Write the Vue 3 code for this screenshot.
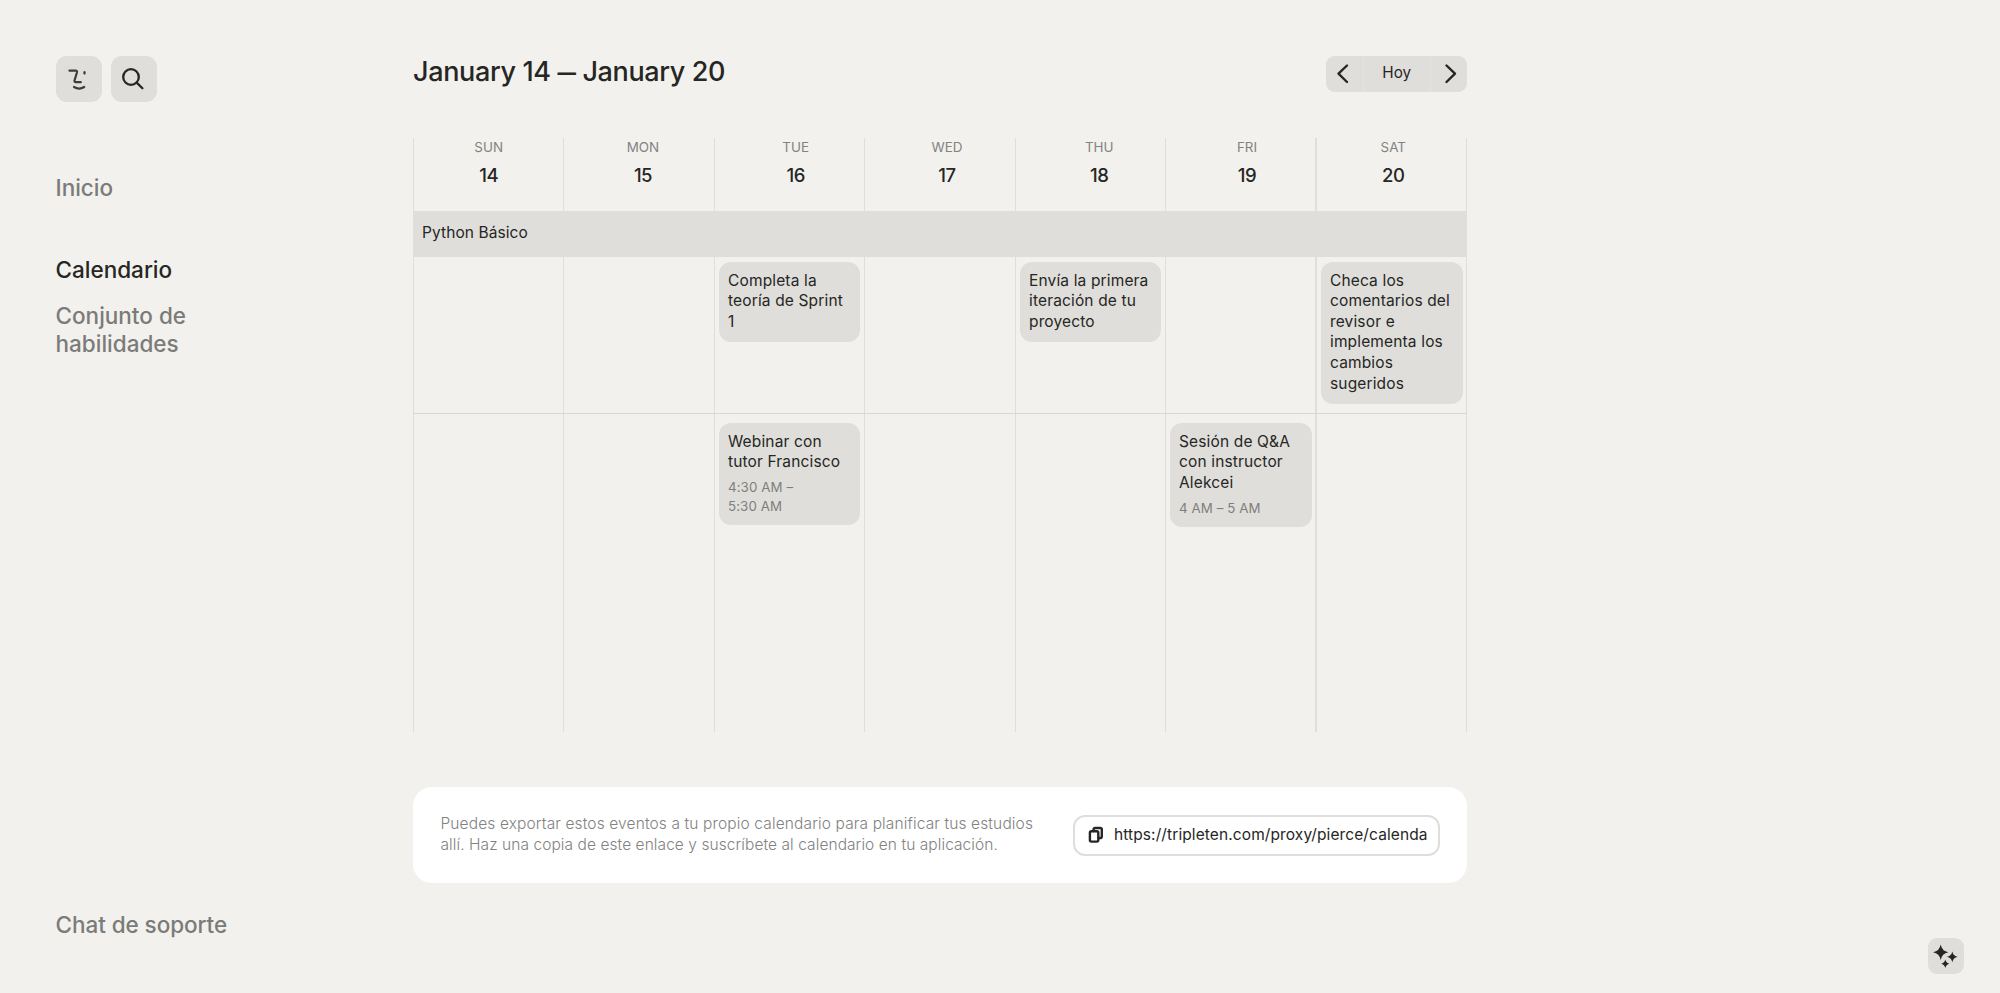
<script setup>
const days = [
  { name: 'SUN', num: 14 },
  { name: 'MON', num: 15 },
  { name: 'TUE', num: 16 },
  { name: 'WED', num: 17 },
  { name: 'THU', num: 18 },
  { name: 'FRI', num: 19 },
  { name: 'SAT', num: 20 },
]
const allDay = [
  null,
  null,
  { lines: ['Completa la', 'teoría de Sprint', '1'] },
  null,
  { lines: ['Envía la primera', 'iteración de tu', 'proyecto'] },
  null,
  { lines: ['Checa los', 'comentarios del', 'revisor e', 'implementa los', 'cambios', 'sugeridos'] },
]
const timed = [
  null,
  null,
  { lines: ['Webinar con', 'tutor Francisco'], time: ['4:30 AM –', '5:30 AM'] },
  null,
  null,
  { lines: ['Sesión de Q&A', 'con instructor', 'Alekcei'], time: ['4 AM – 5 AM'] },
  null,
]
</script>

<template>
  <div class="page">
    <aside class="sidebar">
      <div class="tools">
        <button class="tool">
          <svg width="46" height="46" viewBox="0 0 46 46"><path d="M13.4 14.6H19.6Q21.4 14.6 20.9 16.5L18.6 24.2Q18 26.2 20 26.2H24.8M18 31Q23.2 34.2 28.2 31" /><path d="M28.5 16.2V17.6" /></svg>
        </button>
        <button class="tool">
          <svg class="dark" width="46" height="46" viewBox="0 0 46 46"><circle cx="20" cy="21" r="7.8" /><path d="M25.7 26.6L31.4 32.2" /></svg>
        </button>
      </div>
      <nav>
        <a class="first">Inicio</a>
        <a class="active">Calendario</a>
        <a>Conjunto de<br />habilidades</a>
      </nav>
      <a class="support">Chat de soporte</a>
    </aside>

    <main>
      <header>
        <h1>January 14 <span class="dash">—</span> January 20</h1>
        <div class="switcher">
          <button class="arrow"><svg width="37" height="36" viewBox="0 0 37 36"><path d="M21 9.5L12.5 17.7L21 26" /></svg></button>
          <button class="today">Hoy</button>
          <button class="arrow"><svg width="36" height="36" viewBox="0 0 36 36"><path d="M15.5 9.5L24 17.7L15.5 26" /></svg></button>
        </div>
      </header>

      <section class="calendar">
        <div class="lines"><i v-for="d in days" :key="d.num"></i></div>
        <div class="days">
          <div v-for="d in days" :key="d.num"><span>{{ d.name }}</span><b>{{ d.num }}</b></div>
        </div>
        <div class="course">Python Básico</div>
        <div class="row all-day">
          <div v-for="(e, i) in allDay" :key="i" class="cell">
            <article v-if="e"><p v-for="l in e.lines" :key="l">{{ l }}</p></article>
          </div>
        </div>
        <div class="row timed">
          <div v-for="(e, i) in timed" :key="i" class="cell">
            <article v-if="e">
              <p v-for="l in e.lines" :key="l">{{ l }}</p>
              <div class="time"><small v-for="t in e.time" :key="t">{{ t }}</small></div>
            </article>
          </div>
        </div>
      </section>

      <section class="export">
        <div class="hint">
          <p>Puedes exportar estos eventos a tu propio calendario para planificar tus estudios</p>
          <p>allí. Haz una copia de este enlace y suscríbete al calendario en tu aplicación.</p>
        </div>
        <div class="link">
          <svg width="16" height="18" viewBox="0 0 16 18"><rect x="1.9" y="5.2" width="8.4" height="10.4" rx="1.6" /><path d="M5.6 5V3.6Q5.6 2 7.2 2H12.2Q13.8 2 13.8 3.6V10.4Q13.8 12 12.2 12H10.6" /></svg>
          <span>https://tripleten.com/proxy/pierce/calenda</span>
        </div>
      </section>
    </main>

    <button class="assistant">
      <svg width="36" height="36" viewBox="0 0 36 36"><path d="M12.7 6.5Q13.9 13.1 20.3 14.3Q13.9 15.5 12.7 22.1Q11.5 15.5 5.1 14.3Q11.5 13.1 12.7 6.5ZM24.3 13.4Q25.2 17.9 29.7 18.8Q25.2 19.7 24.3 24.2Q23.4 19.7 18.9 18.8Q23.4 17.9 24.3 13.4ZM17.3 21.5Q18 25.1 21.6 25.8Q18 26.5 17.3 30.1Q16.6 26.5 13 25.8Q16.6 25.1 17.3 21.5Z" /></svg>
    </button>
  </div>
</template>

<style>
body { background: #f2f1ed; }
</style>

<style scoped>
.page { position: relative; display: flex; box-sizing: border-box; width: 100vw; height: 993px; padding: 56px 0 0 55.5px; background: #f2f1ed; color: #262624; font-family: Inter, "Liberation Sans", sans-serif; overflow: hidden; }
p, h1 { margin: 0; }
button { display: flex; padding: 0; border: 0; background: #dfdeda; color: inherit; font: inherit; }
svg { display: block; flex: none; fill: none; stroke: #262624; stroke-width: 2.4; stroke-linecap: round; stroke-linejoin: round; }
.sidebar { display: flex; flex-direction: column; flex: none; box-sizing: border-box; width: 357.5px; height: 937px; padding-bottom: 54px; color: #7b7b79; font-size: 22.5px; font-weight: 450; line-height: 28px; }
.tools { display: flex; gap: 9px; }
.tool { width: 46px; height: 46px; border-radius: 11px; }
.tool svg { stroke: #3c3c3a; stroke-width: 2.2; }
.tool .dark { stroke: #262624; stroke-width: 2.3; }
nav { display: flex; flex-direction: column; gap: 18px; padding-top: 71.5px; }
nav .first { margin-bottom: 36px; }
nav .active { color: #262624; }
.support { margin-top: auto; letter-spacing: -.06px; }
main { flex: none; width: 1054px; }
header { display: flex; justify-content: space-between; height: 82px; }
h1 { font-size: 27px; font-weight: 500; letter-spacing: -.36px; line-height: 32px; }
.dash { position: relative; top: -2.5px; font-size: 18.5px; font-weight: 800; line-height: 1; }
.switcher { display: flex; gap: 1px; height: 36px; width: 141.5px; border-radius: 9px; overflow: hidden; background: #e4e3df; }
.today { flex: 1; justify-content: center; font-size: 15.3px; font-weight: 420; line-height: 33px; }
.calendar { position: relative; height: 594px; }
.lines { position: absolute; inset: 0; display: grid; grid-template-columns: 150px 151px 150px 151px 150px 150px 152px; }
.lines i { border-left: 1px solid #dfdeda; }
.lines i:last-child { border-left-width: 2px; border-right: 1px solid #dfdeda; }
.days { display: grid; grid-template-columns: 151.4px 157.2px 148.2px 154.4px 150.2px 145.2px 147.4px; height: 73px; text-align: center; }
.days span { display: block; color: #838381; font-size: 13.4px; font-weight: 420; line-height: 18px; }
.days b { display: block; margin-top: 7px; font-weight: 500; font-size: 18.5px; letter-spacing: -.5px; line-height: 24px; }
.course { position: relative; height: 46px; padding-left: 9px; background: #dfdeda; font-size: 15.5px; font-weight: 420; letter-spacing: .08px; line-height: 44px; }
.row { position: relative; display: grid; grid-template-columns: 150px 151px 150px 151px 150px 151px 151px; align-items: start; }
.all-day { box-sizing: border-box; height: 157px; border-bottom: 1px solid #d8d7d4; }
.cell { padding: 5px 4px 0 5.3px; }
.timed .cell { padding-top: 9.3px; }
article { padding: 8.5px 0 9.5px 8.7px; border-radius: 12px; background: #dfdeda; font-size: 15.5px; font-weight: 420; letter-spacing: .15px; line-height: 20.65px; white-space: nowrap; }
.time { padding-top: 5px; color: #7f7f7d; font-size: 13.3px; font-weight: 400; letter-spacing: .1px; line-height: 18.5px; }
.time small { display: block; font-size: inherit; }
.export { display: flex; align-items: center; justify-content: space-between; box-sizing: border-box; height: 96px; margin-top: 55px; padding: 0 27px 0 27.5px; border-radius: 19px; background: #fff; }
.hint { color: #828281; font-weight: 320; font-size: 15.5px; letter-spacing: .13px; line-height: 20.7px; white-space: nowrap; }
.hint p:last-child { letter-spacing: .07px; }
.link { display: flex; align-items: center; box-sizing: border-box; width: 367px; height: 41px; padding: 0 9px 0 13px; border: 2px solid #dfdeda; border-radius: 12px; }
.link span { margin-left: 10px; font-size: 15.5px; font-weight: 420; letter-spacing: .1px; line-height: 24px; white-space: nowrap; }
.assistant { position: absolute; right: 36px; bottom: 19px; width: 36px; height: 36px; border-radius: 9px; }
.assistant svg { fill: #262624; stroke: none; }
</style>
